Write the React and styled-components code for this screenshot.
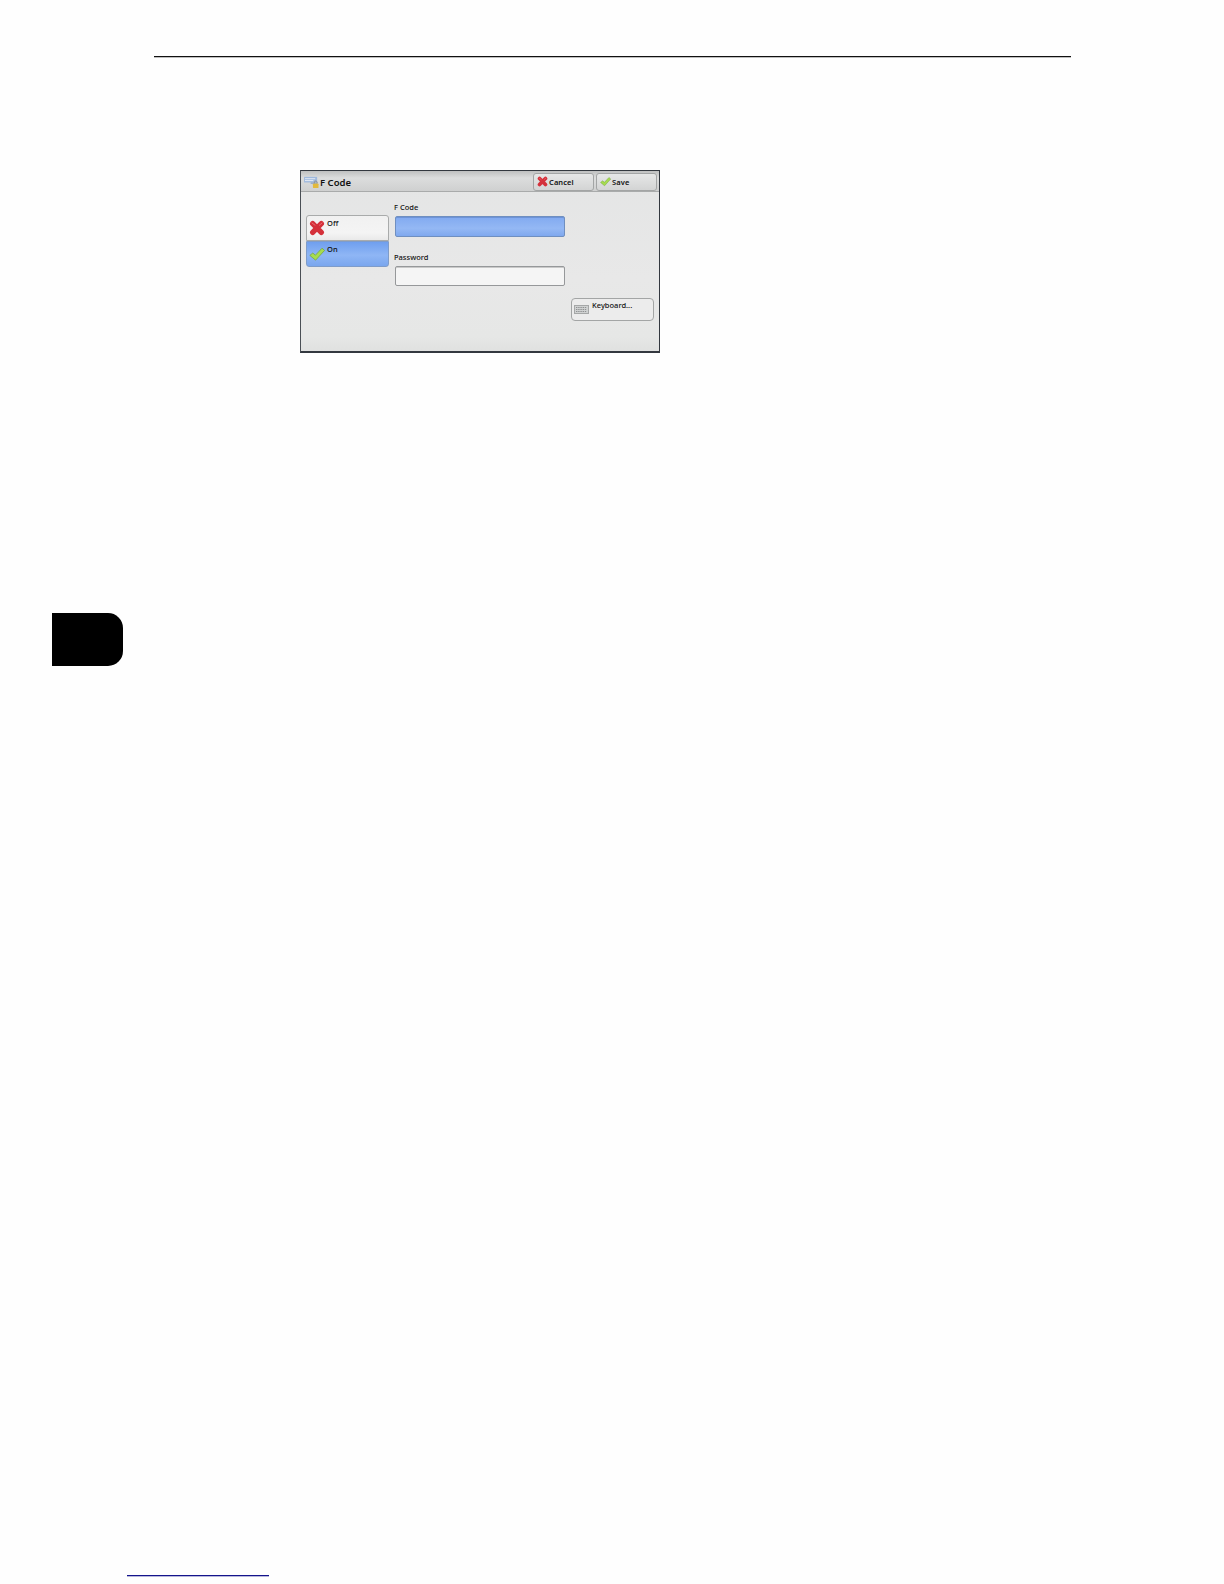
import React from "react";
import styled, { createGlobalStyle } from "styled-components";

const GlobalStyle = createGlobalStyle`
  html, body {
    margin: 0;
    padding: 0;
    background: #fefefe;
  }
`;

const Page = styled.div`
  width: 1224px;
  height: 1584px;
  overflow: hidden;
  display: flex;
  flex-direction: column;
  font-family: "Noto Sans", "Open Sans", sans-serif;
`;

const HeaderRule = styled.div`
  height: 1px;
  width: 917px;
  margin: 56px 0 0 154px;
  background: #111;
  box-shadow: 0 1px 0 rgba(0, 0, 0, 0.25);
`;

const Dialog = styled.div`
  box-sizing: border-box;
  width: 360px;
  height: 183px;
  margin: 113px 0 0 300px;
  display: flex;
  flex-direction: column;
  background: linear-gradient(180deg, #e4e5e5 0%, #e8e8e8 60%, #e6e7e6 92%, #e0e1e0 100%);
  border: 1px solid #33383f;
  border-width: 1px 1px 2px 1px;
  border-left-color: #4a4f55;
`;

const TitleBar = styled.div`
  flex: none;
  box-sizing: border-box;
  height: 21px;
  display: flex;
  align-items: center;
  padding: 1px 2px 0 3px;
  background: linear-gradient(180deg, #bfc0c0 0%, #dcdddd 35%, #cfd0d0 100%);
  border-bottom: 1px solid #a9abab;
`;

const Title = styled.span`
  flex: 1;
  font-size: 9.5px;
  font-weight: 600;
  color: #111;
  line-height: 12px;
  padding-top: 2px;
`;

const BarButton = styled.div`
  box-sizing: border-box;
  width: 61px;
  height: 18px;
  margin-left: 2px;
  display: flex;
  align-items: center;
  gap: 1px;
  padding-left: 3px;
  border: 1px solid #a3a5a5;
  border-radius: 3px;
  background: linear-gradient(180deg, #e6e7e7 0%, #d3d4d4 100%);
  font-size: 7.5px;
  font-weight: 600;
  letter-spacing: 0.1px;
  color: #111;
`;

const Body = styled.div`
  flex: 1;
  display: flex;
  padding: 23px 5px 0 5px;
`;

const OptionColumn = styled.div`
  width: 83px;
  flex: none;
  display: flex;
  flex-direction: column;
`;

const Option = styled.div`
  box-sizing: border-box;
  height: 26px;
  display: flex;
  align-items: flex-start;
  gap: 2px;
  padding: 3px 0 0 2px;
  border: 1px solid ${(p) => (p.$active ? "#7f9cc9" : "#a9abab")};
  border-radius: ${(p) => (p.$active ? "0 0 3px 3px" : "3px 3px 0 0")};
  background: ${(p) =>
    p.$active
      ? "linear-gradient(180deg, #6f9fee 0%, #8fb6f5 55%, #7aa6ee 100%)"
      : "linear-gradient(180deg, #f1f1f1 0%, #f4f4f4 70%, #e9e9e9 100%)"};
  font-size: 7.5px;
  font-weight: 500;
  line-height: 9px;
  color: #111;
`;

const OptionIcon = styled.svg`
  flex: none;
  margin-top: 1px;
`;

const BarIcon = styled.svg`
  flex: none;
`;

const KeyIcon = styled.svg`
  flex: none;
  margin-top: 4px;
`;

const TitleGlyph = styled.svg`
  flex: none;
  margin-top: 1px;
`;

const FieldColumn = styled.div`
  width: 172px;
  flex: none;
  margin-left: 5px;
  margin-top: -13px;
  display: flex;
  flex-direction: column;
`;

const FieldLabel = styled.label`
  height: 10px;
  line-height: 10px;
  font-size: 7.5px;
  font-weight: 500;
  color: #111;
  margin-bottom: 4px;
`;

const Field = styled.div`
  box-sizing: border-box;
  width: 170px;
  height: 20.5px;
  margin: 0 0 15px 1px;
  border-radius: 2px;
  border: 1px solid ${(p) => (p.$active ? "#6f8fc0" : "#96989a")};
  box-shadow: inset 0 1px 0 ${(p) => (p.$active ? "#6d93d8" : "#c9c9c9")};
  background: ${(p) =>
    p.$active
      ? "linear-gradient(180deg, #82aaf0 0%, #94b8f4 60%, #7fa8ee 100%)"
      : "#f5f5f5"};
`;

const KeyboardColumn = styled.div`
  flex: 1;
  display: flex;
  align-items: flex-start;
  justify-content: flex-end;
  margin-top: 83px;
`;

const KeyboardButton = styled.div`
  box-sizing: border-box;
  width: 83px;
  height: 23px;
  display: flex;
  align-items: flex-start;
  gap: 3px;
  padding: 2px 0 0 2px;
  border: 1px solid #a3a5a5;
  border-radius: 4px;
  background: #ececec;
  font-size: 7.5px;
  font-weight: 500;
  line-height: 9px;
  color: #111;
`;

const ChapterTab = styled.div`
  width: 71px;
  height: 53px;
  margin: 260px 0 0 52px;
  background: #000;
  border-radius: 0 15px 15px 0;
`;

const FooterLink = styled.div`
  width: 142px;
  height: 1px;
  margin: 909px 0 0 127px;
  background: #14148c;
  box-shadow: 0 1px 0 rgba(20, 20, 140, 0.3);
`;

const CrossShape = () => (
  <>
    <path
      d="M3.7 3.7 L12.3 12.3 M12.3 3.7 L3.7 12.3"
      stroke="#d4303a"
      strokeWidth="5.4"
      strokeLinecap="round"
      fill="none"
    />
    <path d="M3 3 L6 5.2 M13 3 L10.4 5.2" stroke="#ea6a70" strokeWidth="1" strokeLinecap="round" fill="none" />
  </>
);

const CheckShape = () => (
  <path
    d="M0.8 9.4 L3.8 7 L6.4 9.2 L13 2.2 L15.6 4.4 L6.6 14.2 Z"
    fill="#a6dc4e"
    stroke="#74a23c"
    strokeWidth="0.7"
    strokeLinejoin="round"
  />
);

const KeyboardIcon = () => (
  <KeyIcon width="15" height="9" viewBox="0 0 15 9">
    <rect x="0.5" y="0.5" width="14" height="8" fill="#d0d2d2" stroke="#a5a7a7" />
    <path
      d="M2 2.5 H13 M2 4.5 H13 M2 6.5 H13"
      stroke="#8f9192"
      strokeWidth="1"
      strokeDasharray="1.4 0.8"
    />
  </KeyIcon>
);

const TitleIcon = () => (
  <TitleGlyph width="16" height="14" viewBox="0 0 17 15">
    <rect x="0" y="2" width="14" height="6" fill="#9fb9dd" />
    <path d="M1 4 H12 M1 6 H10" stroke="#e9eef6" strokeWidth="1" />
    <rect x="7" y="8" width="7" height="1.4" fill="#8aa3c8" />
    <rect x="9.5" y="9" width="6" height="5" rx="1" fill="#e2b93c" />
    <path d="M11 9 V7.5 A1.6 1.6 0 0 1 14 7.5 V9" fill="none" stroke="#8c8c8c" strokeWidth="1" />
  </TitleGlyph>
);

export default function App() {
  return (
    <Page>
      <GlobalStyle />
      <HeaderRule />
      <Dialog>
        <TitleBar>
          <TitleIcon />
          <Title>F Code</Title>
          <BarButton>
            <BarIcon width="11" height="11" viewBox="0 0 16 16">
              <CrossShape />
            </BarIcon>
            Cancel
          </BarButton>
          <BarButton>
            <BarIcon width="11" height="11" viewBox="0 0 16 16">
              <CheckShape />
            </BarIcon>
            Save
          </BarButton>
        </TitleBar>
        <Body>
          <OptionColumn>
            <Option>
              <OptionIcon width="16" height="16" viewBox="0 0 16 16">
                <CrossShape />
              </OptionIcon>
              Off
            </Option>
            <Option $active>
              <OptionIcon width="16" height="16" viewBox="0 0 16 16">
                <CheckShape />
              </OptionIcon>
              On
            </Option>
          </OptionColumn>
          <FieldColumn>
            <FieldLabel>F Code</FieldLabel>
            <Field $active />
            <FieldLabel>Password</FieldLabel>
            <Field />
          </FieldColumn>
          <KeyboardColumn>
            <KeyboardButton>
              <KeyboardIcon />
              Keyboard...
            </KeyboardButton>
          </KeyboardColumn>
        </Body>
      </Dialog>
      <ChapterTab />
      <FooterLink />
    </Page>
  );
}
